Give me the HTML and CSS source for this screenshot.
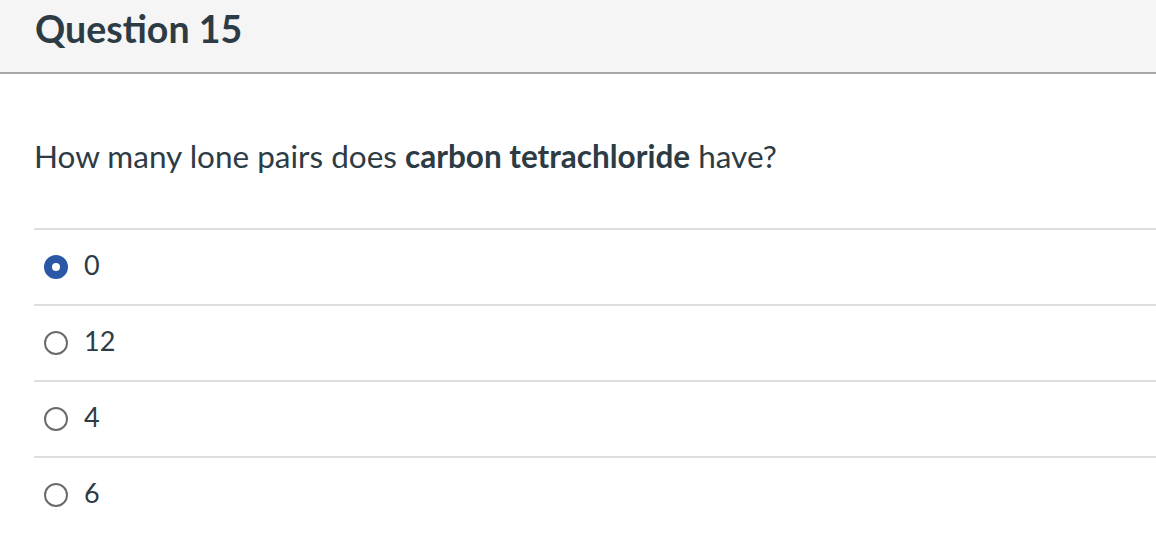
FILE: index.html
```html
<!DOCTYPE html>
<html>
<head>
<meta charset="utf-8">
<link rel="stylesheet" href="styles.css">
</head>
<body>
<div class="question">
  <div class="q-header">
    <h2 class="q-title">Question 15</h2>
  </div>
  <div class="q-body">
    <p class="q-text">How many lone pairs does <strong>carbon tetrachloride</strong> have?</p>
    <div class="answers">
      <label class="answer">
        <span class="radio checked"></span>
        <span class="answer-text">0</span>
      </label>
      <label class="answer">
        <span class="radio"></span>
        <span class="answer-text">12</span>
      </label>
      <label class="answer">
        <span class="radio"></span>
        <span class="answer-text">4</span>
      </label>
      <label class="answer">
        <span class="radio"></span>
        <span class="answer-text">6</span>
      </label>
    </div>
  </div>
</div>
</body>
</html>
```

FILE: styles.css
```css
html, body {
  margin: 0;
  padding: 0;
  background: #ffffff;
}
body {
  font-family: Lato, "Open Sans", sans-serif;
  color: #2d3b45;
  overflow: hidden;
}
.q-header {
  background: #f5f5f5;
  height: 72px;
  border-bottom: 2px solid #a8a8a8;
  padding-left: 35px;
  display: flex;
  align-items: center;
  box-sizing: content-box;
}
.q-title {
  margin: 0;
  font-size: 37.5px;
  font-weight: 700;
  line-height: 1;
  color: #2d3b45;
  padding-bottom: 15px;
}
.q-body {
  padding-left: 34px;
}
.q-text {
  margin: 0;
  padding-top: 60px;
  font-size: 31.5px;
  line-height: 44px;
  padding-bottom: 50px;
}
.q-text strong {
  font-weight: 700;
}
.answers {
  display: flex;
  flex-direction: column;
}
.answer {
  display: flex;
  align-items: center;
  gap: 16px;
  height: 74px;
  border-top: 2px solid #dddddd;
  padding-left: 10px;
  font-size: 27px;
}
.radio {
  width: 20px;
  height: 20px;
  border: 2px solid #6b6b6b;
  border-radius: 50%;
  flex: none;
}
.radio.checked {
  width: 8px;
  height: 8px;
  border: 8px solid #2b58a6;
  background: #ffffff;
}
.answer-text {
  line-height: 1;
  margin-bottom: 6px;
}
```
